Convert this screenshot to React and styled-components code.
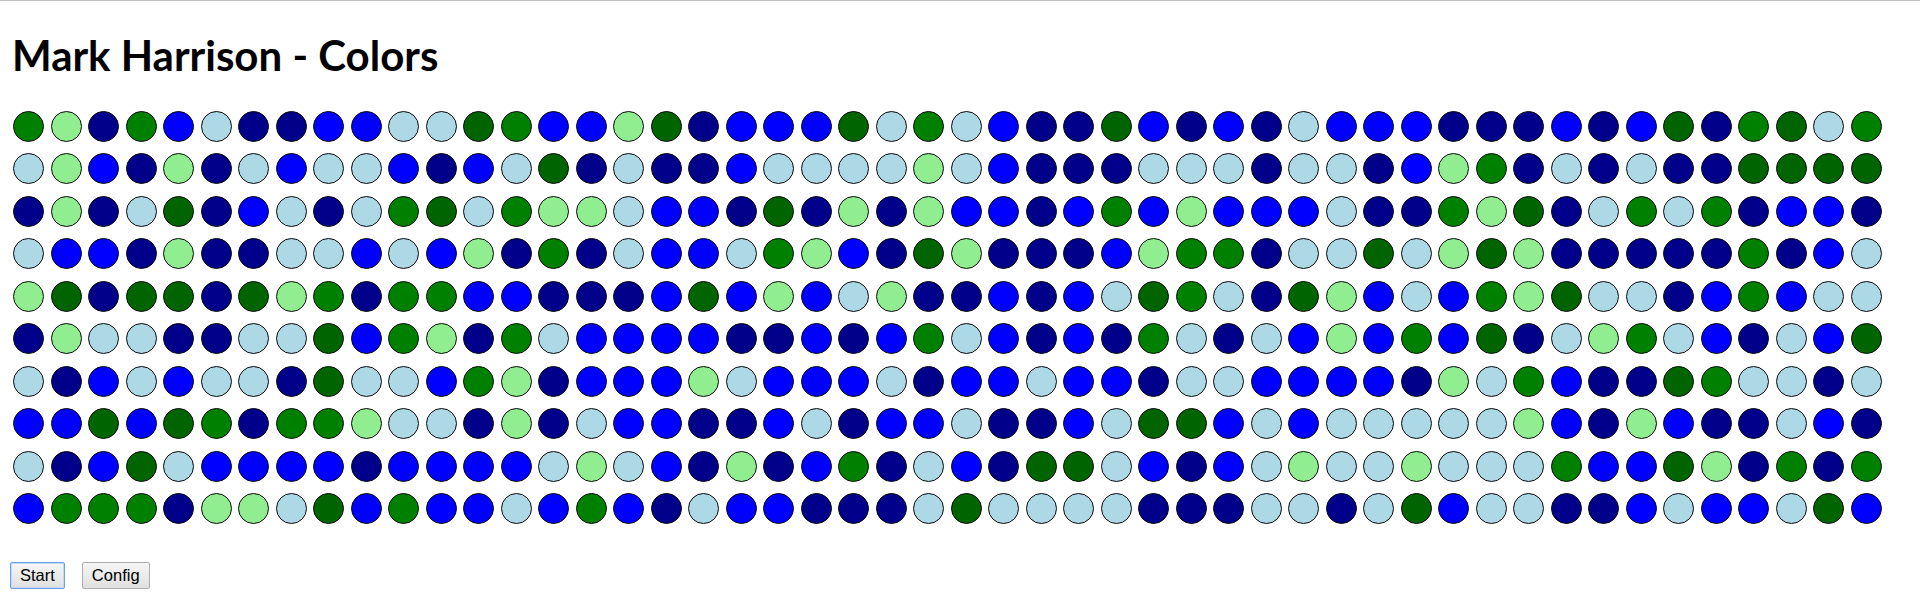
import React from "react";
import styled, { createGlobalStyle } from "styled-components";

const GlobalStyle = createGlobalStyle`
  html, body { margin: 0; padding: 0; background: #ffffff; }
  body { font-family: "Liberation Sans", Arial, sans-serif; }
`;

const COLORS = {
  G: "#008000",
  L: "#90ee90",
  D: "#006400",
  B: "#0000ff",
  C: "#add8e6",
  N: "#00008b",
};

const ROWS = [
  "GLNGBCNNBBCCD" + "GBBLDNBBBDCG" + "CBNNDBNBNCBBB" + "NNNBNBDNGDCG",
  "CLBNLNCBCCBNB" + "CDNCNNBCCCCL" + "CBNNNCCCNCCNB" + "LGNCNCNNDDDD",
  "NLNCDNBCNCGDC" + "GLLCBBNDNLNL" + "BBNBGBLBBBCNN" + "GLDNCGCGNBBN",
  "CBBNLNNCCBCBL" + "NGNCBBCGLBND" + "LNNNBLGGNCCDC" + "LDLNNNNNGNBC",
  "LDNDDNDLGNGGB" + "BNNNBDBLBCLN" + "NBNBCDGCNDLBC" + "BGLDCCNBGBCC",
  "NLCCNNCCDBGLN" + "GCBBBBNNBNBG" + "CBNBNGCNCBLBG" + "BDNCLGCBNCBD",
  "CNBCBCCNDCCBG" + "LNBBBLCBBBCN" + "BBCBBNCCBBBBN" + "LCGBNNDGCCNC",
  "BBDBDGNGGLCCN" + "LNCBBNNBCNBB" + "CNNBCDDBCBCCC" + "CCLBNLBNNCBN",
  "CNBDCBBBBNBBB" + "BCLCBNLNBGNC" + "BNDDCBNBCLCCL" + "CCCGBBDLNGNG",
  "BGGGNLLCDBGBB" + "CBGBNCBBNNNC" + "DCCCCNNNCCNCD" + "BCCNNBCBBCDB",
];

const Page = styled.div`
  border-top: 1px solid #c3c3c3;
  padding: 0 10px;
  min-height: 615px;
`;

const Title = styled.h1`
  margin: 30px 0 0 2px;
  font-family: Lato, "Open Sans", sans-serif;
  font-weight: 700;
  font-size: 42px;
  line-height: 48px;
  color: #000;
`;

const Board = styled.div`
  margin-top: 26px;
  display: grid;
  grid-template-columns: repeat(50, 37.5px);
  grid-auto-rows: 42.5px;
`;

const Cell = styled.div`
  display: flex;
  align-items: center;
  justify-content: center;
`;

const Dot = styled.div`
  box-sizing: border-box;
  width: 31px;
  height: 31px;
  border-radius: 50%;
  border: 1.3px solid #0a0a0a;
  background: ${(p) => p.$color};
`;

const Controls = styled.div`
  margin-top: 32px;
  display: flex;
  gap: 17px;
`;

const Button = styled.button`
  box-sizing: border-box;
  height: 27px;
  padding: 0 9px;
  font-family: "Liberation Sans", Arial, sans-serif;
  font-size: 16.5px;
  color: #000;
  border-radius: 2px;
  border: 1px solid ${(p) => (p.$focused ? "#6f9ee8" : "#adadad")};
  background: linear-gradient(#f6f6f6, #e0e0e0);
  box-shadow: ${(p) => (p.$focused ? "inset 0 0 0 1px #c4d9f6" : "none")};
  cursor: pointer;
`;

export default function App() {
  return (
    <>
      <GlobalStyle />
      <Page>
        <Title>Mark Harrison - Colors</Title>
        <Board>
          {ROWS.map((row, r) =>
            row.split("").map((c, i) => (
              <Cell key={`${r}-${i}`}>
                <Dot $color={COLORS[c]} />
              </Cell>
            ))
          )}
        </Board>
        <Controls>
          <Button $focused>Start</Button>
          <Button>Config</Button>
        </Controls>
      </Page>
    </>
  );
}
